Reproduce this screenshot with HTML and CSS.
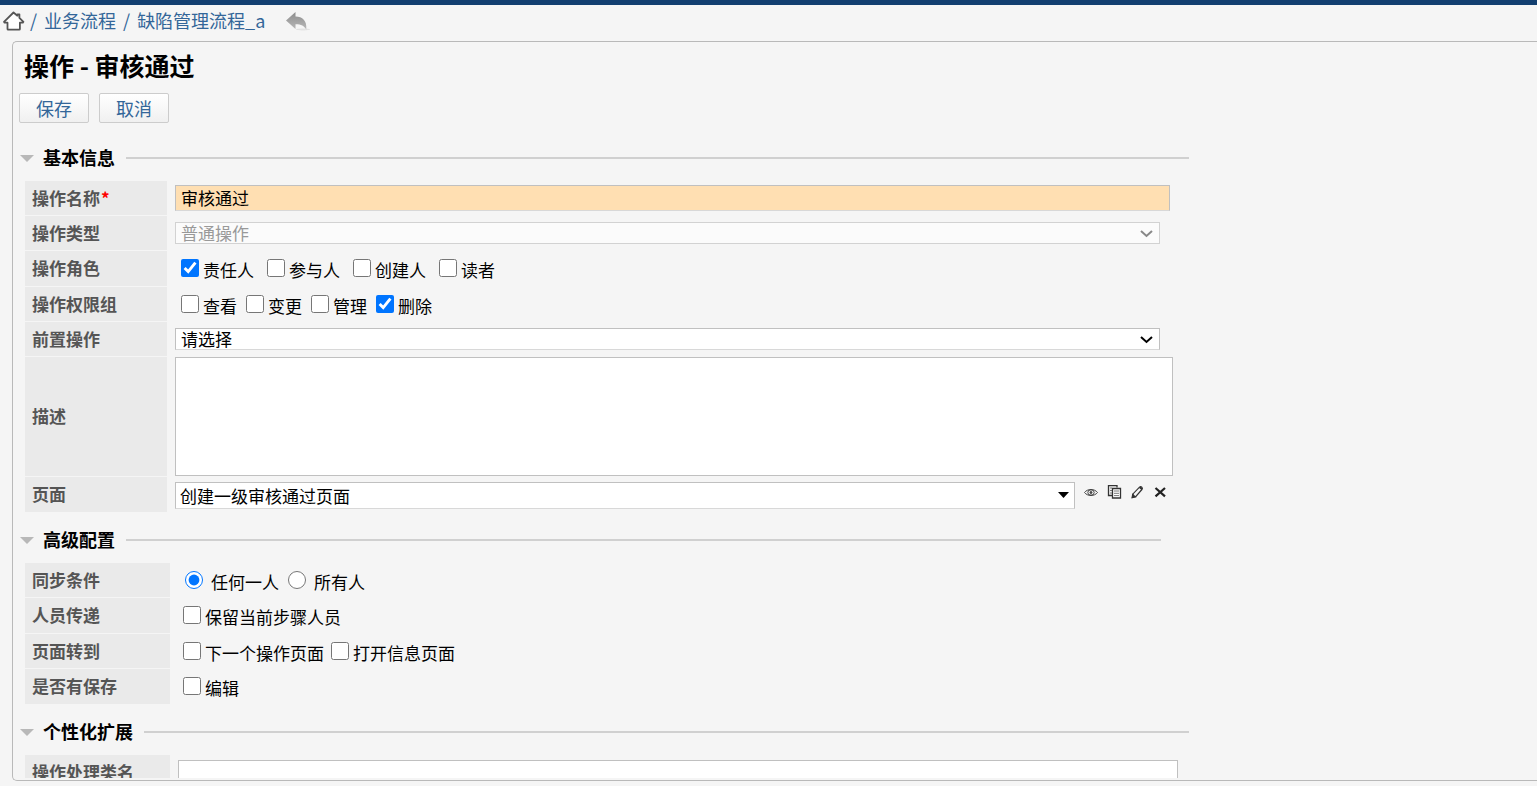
FILE: index.html
```html
<!DOCTYPE html>
<html lang="zh-CN">
<head>
<meta charset="utf-8">
<title>操作 - 审核通过</title>
<link rel="stylesheet" href="styles.css">
</head>
<body>
<header class="topbar"></header>
<nav class="crumbs" aria-label="导航">
  <a href="#" class="crumb-home" aria-label="首页">
    <svg width="22" height="20" viewBox="0 0 22 20"><path d="M10.500 1.500 1 10.800l.6.900h2.900v6.300q0 .7.700.7h11q.7 0 .7-.7v-6.300h2.900l.6-.9-4-4V3.300h-2v1.400z" fill="#fff" stroke="#555" stroke-width="1.800" stroke-linejoin="round"/></svg>
  </a>
  <span class="crumb-sep">/</span>
  <a href="#">业务流程</a>
  <span class="crumb-sep">/</span>
  <a href="#">缺陷管理流程_a</a>
  <a href="#" class="crumb-back" aria-label="返回">
    <svg width="24" height="20" viewBox="0 0 24 20"><defs><linearGradient id="g" x1="0" y1="0" x2="0" y2="1"><stop offset="0" stop-color="#8c8c8c"/><stop offset="1" stop-color="#b8b8b8"/></linearGradient></defs><ellipse cx="17" cy="18.4" rx="7" ry="1" fill="#e2e2e2"/><path d="M0 9.500 9.500 1v4.600C16.500 5.800 21 9.500 20.300 18.500 18 14.800 15.500 13.200 9.500 13.200V18z" fill="url(#g)"/></svg>
  </a>
</nav>
<main class="panel">
  <form class="content">
    <h1 class="title">操作 - 审核通过</h1>
    <div class="actions">
      <button type="button" class="btn">保存</button>
      <button type="button" class="btn">取消</button>
    </div>

    <section class="section">
      <h2 class="section-head"><span class="arrow"></span>基本信息<span class="rule"></span></h2>
      <div class="rows">
        <div class="row">
          <label class="name" for="opname">操作名称<span class="required">*</span></label>
          <div class="cell"><input class="text text-active" id="opname" type="text" value="审核通过"></div>
        </div>
        <div class="row">
          <label class="name" for="optype">操作类型</label>
          <div class="cell"><div class="select-wrap is-disabled">
            <select class="select" id="optype" disabled><option>普通操作</option></select>
            <svg class="chevron" width="14" height="10" viewBox="0 0 14 10"><path d="M1 2l5.500 5L12 2" fill="none" stroke="currentColor" stroke-width="2"/></svg>
          </div></div>
        </div>
        <div class="row row-tall" role="group" aria-label="操作角色">
          <span class="name">操作角色</span>
          <div class="options options-wide">
            <label class="option"><input type="checkbox" checked>责任人</label>
            <label class="option"><input type="checkbox">参与人</label>
            <label class="option"><input type="checkbox">创建人</label>
            <label class="option"><input type="checkbox">读者</label>
          </div>
        </div>
        <div class="row" role="group" aria-label="操作权限组">
          <span class="name">操作权限组</span>
          <div class="options">
            <label class="option"><input type="checkbox">查看</label>
            <label class="option"><input type="checkbox">变更</label>
            <label class="option"><input type="checkbox">管理</label>
            <label class="option"><input type="checkbox" checked>删除</label>
          </div>
        </div>
        <div class="row">
          <label class="name" for="preop">前置操作</label>
          <div class="cell"><div class="select-wrap">
            <select class="select" id="preop"><option>请选择</option></select>
            <svg class="chevron" width="14" height="10" viewBox="0 0 14 10"><path d="M1 2l5.500 5L12 2" fill="none" stroke="currentColor" stroke-width="2"/></svg>
          </div></div>
        </div>
        <div class="row">
          <label class="name" for="desc">描述</label>
          <div class="cell cell-area"><textarea class="area" id="desc"></textarea></div>
        </div>
        <div class="row">
          <label class="name" for="page">页面</label>
          <div class="cell cell-page">
            <div class="select-wrap combo">
              <select class="select" id="page"><option>创建一级审核通过页面</option></select>
              <svg class="caret" width="12" height="7" viewBox="0 0 12 7"><path d="M0 0h11L5.500 6z" fill="#000"/></svg>
            </div>
            <div class="tools">
              <button type="button" class="tool" aria-label="查看"><svg width="16" height="16" viewBox="0 0 16 16" fill="none" stroke="#444"><path d="M1.500 8.500C4.500 4.500 11.500 4.500 14.500 8.500 11.500 12.500 4.500 12.500 1.500 8.500z"/><ellipse cx="8" cy="8.500" rx="3.200" ry="2.700"/><circle cx="8" cy="8.500" r="1" fill="#444"/></svg></button>
              <button type="button" class="tool" aria-label="复制"><svg width="16" height="16" viewBox="0 0 16 16" fill="none" stroke="#333" stroke-width="1.300"><path d="M6 11.500H2.500V1.600H11v2"/><path d="M4 4h2M4 6.500h2M4 9h2" stroke="#777" stroke-width="1"/><path d="M6.500 4.500h8v9.500h-8z" fill="#fff"/><path d="M8 7h5M8 9.300h5M8 11.600h5" stroke="#777" stroke-width="1"/></svg></button>
              <button type="button" class="tool" aria-label="编辑"><svg width="16" height="16" viewBox="0 0 16 16" fill="none" stroke="#333" stroke-width="1.200"><path d="M3.500 13.200l.7-3.500 6.300-6.500q1.200-1 2.300 0t.1 2.300l-6 6.900z"/><path d="M3.500 13.200l.4-2.200 1.800 1.700zM10.700 3.200l2.500 2.200" stroke-width="1.800"/></svg></button>
              <button type="button" class="tool" aria-label="删除"><svg width="16" height="16" viewBox="0 0 16 16" fill="none" stroke="#222"><path d="M3.500 4l9.500 8.400M13 4l-9.500 8.400" stroke-width="2.200"/></svg></button>
            </div>
          </div>
        </div>
      </div>
    </section>

    <section class="section section-wide-label">
      <h2 class="section-head section-head-short"><span class="arrow"></span>高级配置<span class="rule"></span></h2>
      <div class="rows">
        <div class="row" role="group" aria-label="同步条件">
          <span class="name">同步条件</span>
          <div class="options options-radio">
            <label class="option"><input type="radio" name="sync" checked>任何一人</label>
            <label class="option"><input type="radio" name="sync">所有人</label>
          </div>
        </div>
        <div class="row row-tall" role="group" aria-label="人员传递">
          <span class="name">人员传递</span>
          <div class="options"><label class="option"><input type="checkbox">保留当前步骤人员</label></div>
        </div>
        <div class="row" role="group" aria-label="页面转到">
          <span class="name">页面转到</span>
          <div class="options options-tight">
            <label class="option"><input type="checkbox">下一个操作页面</label>
            <label class="option"><input type="checkbox">打开信息页面</label>
          </div>
        </div>
        <div class="row" role="group" aria-label="是否有保存">
          <span class="name">是否有保存</span>
          <div class="options"><label class="option"><input type="checkbox">编辑</label></div>
        </div>
      </div>
    </section>

    <section class="section section-wide-label">
      <h2 class="section-head"><span class="arrow"></span>个性化扩展<span class="rule"></span></h2>
      <div class="rows">
        <div class="row">
          <label class="name" for="handler">操作处理类名</label>
          <div class="cell cell-handler"><input class="text text-full" id="handler" type="text"></div>
        </div>
      </div>
    </section>
  </form>
</main>
</body>
</html>
```

FILE: styles.css
```css
* {
  box-sizing: border-box;
}

body {
  margin: 0;
  height: 100vh;
  display: flex;
  flex-direction: column;
  overflow: hidden;
  background: #f5f5f5;
  color: #000;
  font-family: "Noto Sans CJK SC", "Liberation Sans", sans-serif;
  font-size: 17px;
  line-height: 24px;
}

input, select, textarea, button {
  font: inherit;
  color: inherit;
}

.topbar {
  flex: none;
  height: 5px;
  background: #123f70;
}

.crumbs {
  flex: none;
  display: flex;
  align-items: center;
  gap: 7px;
  height: 36px;
  padding: 0 0 6px 3px;
  font-size: 18px;
  color: #336699;
}

.crumbs a {
  color: #336699;
  text-decoration: none;
}

.crumb-home,
.crumb-back {
  display: flex;
  padding-top: 2px;
}

.crumb-home {
  margin-right: -2px;
}

.crumb-back {
  margin-left: 14px;
}

.panel {
  flex: 1;
  min-height: 0;
  display: flex;
  margin: 0 0 5px 12px;
  padding-bottom: 2px;
  border: 1px solid #b9b9b9;
  border-right: 0;
  border-radius: 5px 0 0 5px;
}

.content {
  flex: 1;
  overflow: hidden;
  padding-left: 6px;
}

.title {
  margin: 7px 0 0 5px;
  font-size: 25px;
  line-height: 32px;
}

.actions {
  display: flex;
  gap: 10px;
  margin: 12px 0 16px;
}

.btn {
  width: 70px;
  height: 30px;
  padding: 0;
  border: 1px solid #ccc;
  border-radius: 2px;
  background: linear-gradient(#fff, #f0f0f0);
  color: #336699;
  font-size: 18px;
  line-height: 28px;
}

.section {
  max-width: 1170px;
  margin-bottom: 9px;
}

.section-head {
  display: flex;
  align-items: center;
  height: 38px;
  margin: 0 0 4px;
  padding: 0 0 2px 1px;
  font-size: 18px;
}

.section-head-short {
  margin-right: 28px;
}

.arrow {
  margin: 2px 9px 0 0;
  border: 7px solid transparent;
  border-top-color: #b8b8b8;
  border-bottom-width: 0;
}

.rule {
  flex: 1;
  height: 2px;
  margin: 2px 0 0 11px;
  background: #d0d0d0;
}

.rows {
  padding-left: 6px;
}

.row {
  display: grid;
  grid-template-columns: 142px 1fr;
  column-gap: 8px;
  min-height: 35px;
}

.row-tall {
  min-height: 36px;
}

.section-wide-label .row {
  grid-template-columns: 145px 1fr;
}

.name {
  display: flex;
  align-items: center;
  padding: 0 0 1px 7px;
  border-bottom: 1px solid #f5f5f5;
  background: #eaeaea;
  color: #555;
  font-weight: bold;
}

.row:last-child .name {
  border-bottom: 0;
}

.required {
  margin-left: 1px;
  color: #f00;
}

.cell {
  display: flex;
  align-items: center;
  padding-bottom: 2px;
}

.cell-area {
  padding-bottom: 1px;
}

.text {
  width: 100%;
  height: 26px;
  margin-right: 19px;
  padding: 0 5px;
  border: 1px solid #c0c0c0;
  border-bottom-color: #d8d8d8;
  background: #fff;
}

.text-active {
  background: #ffdfb2;
}

.text-full {
  margin-right: 11px;
}

.select-wrap {
  position: relative;
  flex: 1;
  display: flex;
  margin-right: 29px;
}

.select {
  appearance: none;
  width: 100%;
  height: 22px;
  padding: 0 5px;
  border: 1px solid #c0c0c0;
  border-bottom-color: #d8d8d8;
  border-radius: 0;
  background: #fff;
  line-height: 20px;
  opacity: 1;
}

.is-disabled .select {
  border-color: #d2d2d2;
  background: #fbfbfb;
  color: #999;
}

.is-disabled {
  color: #888;
}

.chevron {
  position: absolute;
  right: 6px;
  top: 7px;
  pointer-events: none;
}

.options {
  display: flex;
  gap: 9px;
  padding: 7px 0 0 6px;
}

.options-wide {
  gap: 13px;
}

.options-tight {
  gap: 7px;
}

.section-wide-label .options {
  padding-left: 5px;
}

.option {
  display: flex;
  align-items: baseline;
  gap: 4px;
}

.option input {
  width: 18px;
  height: 18px;
  margin: 0;
}

.section-wide-label .options-radio {
  padding-left: 7px;
}

.options-radio .option {
  gap: 8px;
}

.area {
  width: 100%;
  height: 119px;
  margin-right: 16px;
  padding: 4px;
  border: 1px solid #c0c0c0;
  background: #fff;
  resize: none;
}

.cell-page {
  gap: 8px;
  padding: 2px 0 0;
}

.cell-handler {
  padding-bottom: 0;
}

.combo {
  margin-right: 0;
}

.combo .select {
  height: 27px;
  padding: 0 4px;
  line-height: 25px;
}

.caret {
  position: absolute;
  right: 5px;
  top: 10px;
  pointer-events: none;
}

.tools {
  display: flex;
  gap: 7px;
  align-self: flex-start;
  margin: 5px 21px 0 0;
}

.tool {
  display: flex;
  padding: 0;
  border: 0;
  background: none;
}
```
